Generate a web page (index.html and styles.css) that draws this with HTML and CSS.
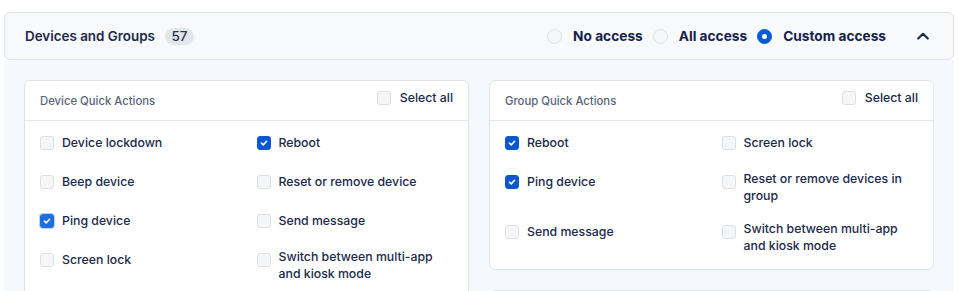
FILE: index.html
```html
<!DOCTYPE html>
<html lang="en">
<head>
<meta charset="utf-8">
<title>Devices and Groups</title>
<link rel="stylesheet" href="styles.css">
</head>
<body>
<div class="page">
  <section class="panel">
    <header class="panel-head">
      <div class="panel-title">
        <span class="title-text">Devices and Groups</span>
        <span class="badge">57</span>
      </div>
      <div class="access">
        <label class="radio"><span class="radio-dot"></span><span class="radio-text">No access</span></label>
        <label class="radio"><span class="radio-dot"></span><span class="radio-text">All access</span></label>
        <label class="radio"><span class="radio-dot is-on"></span><span class="radio-text">Custom access</span></label>
        <button class="collapse" type="button" aria-label="Collapse">
          <svg width="12" height="8" viewBox="0 0 12 8"><path d="M1.2 6.6 L6 1.8 L10.8 6.6" fill="none" stroke="#1b2a4a" stroke-width="2.1" stroke-linecap="round" stroke-linejoin="round"/></svg>
        </button>
      </div>
    </header>
    <div class="panel-body">
      <div class="column">
        <div class="card">
          <div class="card-head">
            <span class="card-title">Device Quick Actions</span>
            <label class="select-all"><span class="box"></span><span>Select all</span></label>
          </div>
          <div class="card-body">
            <label class="opt"><span class="box"></span><span class="opt-text">Device lockdown</span></label>
            <label class="opt"><span class="box is-on"><svg viewBox="0 0 14 14"><path d="M4 7.2 L6.1 9.2 L10 5" fill="none" stroke="#fff" stroke-width="1.8" stroke-linecap="round" stroke-linejoin="round"/></svg></span><span class="opt-text">Reboot</span></label>
            <label class="opt"><span class="box"></span><span class="opt-text">Beep device</span></label>
            <label class="opt"><span class="box"></span><span class="opt-text">Reset or remove device</span></label>
            <label class="opt"><span class="box is-on is-focus"><svg viewBox="0 0 14 14"><path d="M4 7.2 L6.1 9.2 L10 5" fill="none" stroke="#fff" stroke-width="1.8" stroke-linecap="round" stroke-linejoin="round"/></svg></span><span class="opt-text">Ping device</span></label>
            <label class="opt"><span class="box"></span><span class="opt-text">Send message</span></label>
            <label class="opt"><span class="box"></span><span class="opt-text">Screen lock</span></label>
            <label class="opt"><span class="box"></span><span class="opt-text">Switch between multi-app and kiosk mode</span></label>
          </div>
        </div>
      </div>
      <div class="column">
        <div class="card">
          <div class="card-head">
            <span class="card-title">Group Quick Actions</span>
            <label class="select-all"><span class="box"></span><span>Select all</span></label>
          </div>
          <div class="card-body">
            <label class="opt"><span class="box is-on"><svg viewBox="0 0 14 14"><path d="M4 7.2 L6.1 9.2 L10 5" fill="none" stroke="#fff" stroke-width="1.8" stroke-linecap="round" stroke-linejoin="round"/></svg></span><span class="opt-text">Reboot</span></label>
            <label class="opt"><span class="box"></span><span class="opt-text">Screen lock</span></label>
            <label class="opt"><span class="box is-on"><svg viewBox="0 0 14 14"><path d="M4 7.2 L6.1 9.2 L10 5" fill="none" stroke="#fff" stroke-width="1.8" stroke-linecap="round" stroke-linejoin="round"/></svg></span><span class="opt-text">Ping device</span></label>
            <label class="opt"><span class="box"></span><span class="opt-text">Reset or remove devices in group</span></label>
            <label class="opt"><span class="box"></span><span class="opt-text">Send message</span></label>
            <label class="opt"><span class="box"></span><span class="opt-text">Switch between multi-app and kiosk mode</span></label>
          </div>
        </div>
        <div class="card card-next"></div>
      </div>
    </div>
  </section>
</div>
</body>
</html>
```

FILE: styles.css
```css
* { box-sizing: border-box; }

html, body {
  margin: 0;
  padding: 0;
  background: #ffffff;
}

body {
  font-family: Inter, "Noto Sans", "Liberation Sans", sans-serif;
  color: #1b2a4a;
  -webkit-font-smoothing: antialiased;
}

.page {
  padding: 12px 5px 0 4px;
}

.panel {
  display: flex;
  flex-direction: column;
}

.panel-head {
  height: 48px;
  display: flex;
  align-items: center;
  justify-content: space-between;
  padding: 0 18px 0 20px;
  background: #f8f9fb;
  border: 1px solid #dfe2e7;
  border-radius: 6px;
}

.panel-title {
  display: flex;
  align-items: center;
  gap: 10px;
}

.title-text {
  font-size: 13.4px;
  font-weight: 600;
  color: #1c2a4b;
}

.badge {
  display: inline-flex;
  align-items: center;
  justify-content: center;
  height: 17px;
  min-width: 29px;
  padding: 0 6px;
  border-radius: 9px;
  background: #e3e6eb;
  font-size: 13.4px;
  font-weight: 500;
  color: #28324c;
}

.access {
  display: flex;
  align-items: center;
  gap: 10px;
}

.radio {
  display: flex;
  align-items: center;
  gap: 11px;
}

.radio-dot {
  width: 15px;
  height: 15px;
  border-radius: 50%;
  border: 1px solid #d9dde3;
  background: #f6f7f9;
  display: flex;
  align-items: center;
  justify-content: center;
}

.radio-dot.is-on {
  background: #0a5bd3;
  border-color: #0a5bd3;
}

.radio-dot.is-on::after {
  content: "";
  width: 5px;
  height: 5px;
  border-radius: 50%;
  background: #ffffff;
}

.radio-text {
  font-size: 13.7px;
  font-weight: 700;
  color: #14234a;
}

.collapse {
  width: 24px;
  height: 24px;
  margin-left: 15px;
  padding: 0;
  border: 0;
  background: transparent;
  display: flex;
  align-items: center;
  justify-content: center;
}

.panel-body {
  background: #f5f8fd;
  padding: 20px 20px 0 20px;
  display: grid;
  grid-template-columns: 1fr 1fr;
  column-gap: 20px;
  align-items: start;
  height: 232px;
  overflow: hidden;
}

.column {
  display: flex;
  flex-direction: column;
  gap: 20px;
}

.card {
  background: #ffffff;
  border: 1px solid #dfe2e7;
  border-radius: 6px;
}

.card-next {
  height: 80px;
  margin-left: 1px;
}

.card-head {
  height: 40px;
  display: flex;
  align-items: center;
  justify-content: space-between;
  padding: 0 15px 0 15px;
  border-bottom: 1px solid #e3e6ea;
}

.card-title {
  font-size: 11.3px;
  font-weight: 500;
  color: #596479;
}

.select-all {
  display: flex;
  align-items: center;
  gap: 9px;
  margin-bottom: 6px;
  font-size: 12.3px;
  font-weight: 500;
  color: #1b2a4a;
}

.card-body {
  display: grid;
  grid-template-columns: 1fr 1fr;
  column-gap: 20px;
  row-gap: 17px;
  padding: 11px 15px 15px 15px;
  align-items: start;
}

.opt {
  display: flex;
  align-items: flex-start;
  gap: 8px;
}

.box {
  flex: 0 0 14px;
  width: 14px;
  height: 14px;
  border-radius: 3px;
  border: 1px solid #dcdfe4;
  background: #f5f6f8;
  display: flex;
  align-items: center;
  justify-content: center;
}

.opt .box {
  margin-top: 4px;
}

.box svg {
  width: 14px;
  height: 14px;
  display: block;
}

.box.is-on {
  background: #0b58cc;
  border-color: #0b58cc;
}

.box.is-focus {
  background: #1c6fe3;
  border-color: #1c6fe3;
  box-shadow: 0 0 0 1px #b8d1f5;
}

.opt-text {
  min-height: 22px;
  display: flex;
  align-items: center;
  font-size: 12.3px;
  font-weight: 500;
  line-height: 16.5px;
  color: #1b2a4a;
}
```
